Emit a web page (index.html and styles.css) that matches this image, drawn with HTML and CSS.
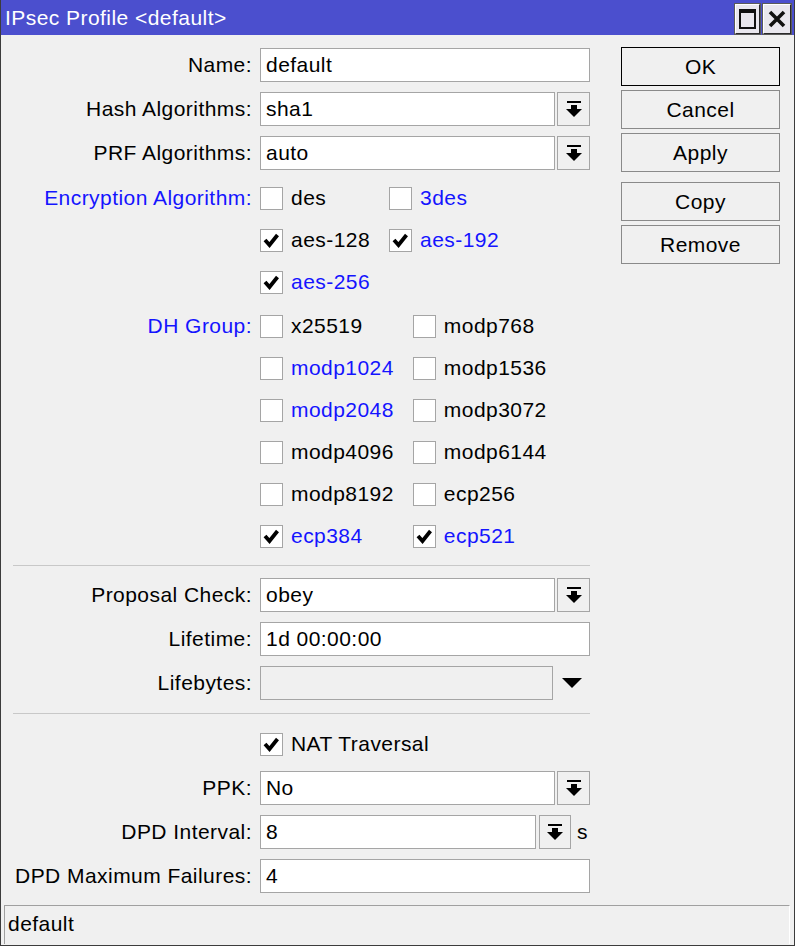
FILE: index.html
```html
<!DOCTYPE html>
<html lang="en">
<head>
    <meta charset="UTF-8">
    <title>IPsec Profile &lt;default&gt;</title>
    <link rel="stylesheet" href="styles.css">
</head>
<body>
    <div class="window">
        <div class="titlebar">
            <span class="title">IPsec Profile &lt;default&gt;</span>
            <div class="title-buttons">
                <button class="tbtn"><span class="max-icon"></span></button>
                <button class="tbtn">
                    <svg width="18" height="18" viewBox="0 0 18 18"><path d="M2 2 L16 16 M16 2 L2 16" stroke="#111" stroke-width="3.6"/></svg>
                </button>
            </div>
        </div>

        <div class="content">
            <div class="form">
                <div class="row">
                    <div class="label">Name:</div>
                    <div class="field"><div class="input">default</div></div>
                </div>
                <div class="row">
                    <div class="label">Hash Algorithms:</div>
                    <div class="field"><div class="input">sha1</div><div class="drop"><svg width="16" height="17" viewBox="0 0 16 17"><rect x="1" y="0" width="14" height="2"/><rect x="5" y="4" width="6" height="4"/><path d="M0 8 H16 L8 16 Z"/></svg></div></div>
                </div>
                <div class="row">
                    <div class="label">PRF Algorithms:</div>
                    <div class="field"><div class="input">auto</div><div class="drop"><svg width="16" height="17" viewBox="0 0 16 17"><rect x="1" y="0" width="14" height="2"/><rect x="5" y="4" width="6" height="4"/><path d="M0 8 H16 L8 16 Z"/></svg></div></div>
                </div>

                <div class="row group">
                    <div class="label blue">Encryption Algorithm:</div>
                    <div class="checks">
                        <div class="check"><span class="box"></span>des</div>
                        <div class="check blue"><span class="box"></span>3des</div>
                        <div class="check"><span class="box on"></span>aes-128</div>
                        <div class="check blue"><span class="box on"></span>aes-192</div>
                        <div class="check blue"><span class="box on"></span>aes-256</div>
                    </div>
                </div>

                <div class="row group">
                    <div class="label blue">DH Group:</div>
                    <div class="checks">
                        <div class="check"><span class="box"></span>x25519</div>
                        <div class="check"><span class="box"></span>modp768</div>
                        <div class="check blue"><span class="box"></span>modp1024</div>
                        <div class="check"><span class="box"></span>modp1536</div>
                        <div class="check blue"><span class="box"></span>modp2048</div>
                        <div class="check"><span class="box"></span>modp3072</div>
                        <div class="check"><span class="box"></span>modp4096</div>
                        <div class="check"><span class="box"></span>modp6144</div>
                        <div class="check"><span class="box"></span>modp8192</div>
                        <div class="check"><span class="box"></span>ecp256</div>
                        <div class="check blue"><span class="box on"></span>ecp384</div>
                        <div class="check blue"><span class="box on"></span>ecp521</div>
                    </div>
                </div>

                <div class="sep"></div>

                <div class="row">
                    <div class="label">Proposal Check:</div>
                    <div class="field"><div class="input">obey</div><div class="drop"><svg width="16" height="17" viewBox="0 0 16 17"><rect x="1" y="0" width="14" height="2"/><rect x="5" y="4" width="6" height="4"/><path d="M0 8 H16 L8 16 Z"/></svg></div></div>
                </div>
                <div class="row">
                    <div class="label">Lifetime:</div>
                    <div class="field"><div class="input">1d 00:00:00</div></div>
                </div>
                <div class="row">
                    <div class="label">Lifebytes:</div>
                    <div class="field"><div class="input disabled"></div><div class="arrow"><svg width="20" height="10" viewBox="0 0 20 10"><path d="M0 0 H20 L10 10 Z"/></svg></div></div>
                </div>

                <div class="sep sep-low"></div>

                <div class="row">
                    <div class="label"></div>
                    <div class="field"><div class="check"><span class="box on"></span>NAT Traversal</div></div>
                </div>
                <div class="row">
                    <div class="label">PPK:</div>
                    <div class="field"><div class="input">No</div><div class="drop"><svg width="16" height="17" viewBox="0 0 16 17"><rect x="1" y="0" width="14" height="2"/><rect x="5" y="4" width="6" height="4"/><path d="M0 8 H16 L8 16 Z"/></svg></div></div>
                </div>
                <div class="row">
                    <div class="label">DPD Interval:</div>
                    <div class="field short"><div class="input">8</div><div class="drop"><svg width="16" height="17" viewBox="0 0 16 17"><rect x="1" y="0" width="14" height="2"/><rect x="5" y="4" width="6" height="4"/><path d="M0 8 H16 L8 16 Z"/></svg></div><span class="unit">s</span></div>
                </div>
                <div class="row">
                    <div class="label">DPD Maximum Failures:</div>
                    <div class="field"><div class="input">4</div></div>
                </div>
            </div>

            <div class="actions">
                <button class="btn default">OK</button>
                <button class="btn">Cancel</button>
                <button class="btn">Apply</button>
                <button class="btn spaced">Copy</button>
                <button class="btn">Remove</button>
            </div>
        </div>

        <div class="status">default</div>
    </div>

    <script>
        // check marks for the ticked boxes
        document.querySelectorAll('.box.on').forEach(function (box) {
            box.innerHTML = '<svg width="21" height="21" viewBox="0 0 21 21"><path d="M4 10 L8.5 15 L16.5 5" fill="none" stroke="#000" stroke-width="3.8"/></svg>';
        });
    </script>
</body>
</html>
```

FILE: styles.css
```css
* {
    box-sizing: border-box;
}

body {
    margin: 0;
    font-family: 'Liberation Sans', Arial, sans-serif;
    font-size: 21px;
    letter-spacing: 0.45px;
    color: #000;
    background-color: #f0f0f0;
}

.window {
    width: 795px;
    height: 946px;
    display: flex;
    flex-direction: column;
    border: 1px solid #3c3c3c;
    border-top: none;
    background-color: #f0f0f0;
}

.titlebar {
    height: 35px;
    display: flex;
    align-items: center;
    justify-content: space-between;
    padding: 0 3px 0 4px;
    background-color: #4b4fce;
    color: #fff;
}

.title {
    padding-top: 1px;
}

.title-buttons {
    display: flex;
    gap: 3px;
    padding-top: 3px;
}

.tbtn {
    width: 28px;
    height: 30px;
    padding: 0;
    display: flex;
    align-items: center;
    justify-content: center;
    background-color: #e9e7ee;
    border: 1px solid #2a2a2a;
    border-top-color: #fff;
    border-left-color: #fff;
    outline: 1px solid #5a5a5a;
}

.tbtn:first-child {
    width: 25px;
}

.max-icon {
    width: 17px;
    height: 20px;
    border: 2px solid #111;
    border-top-width: 4px;
}

.content {
    flex: 1;
    display: flex;
}

.form {
    width: 589px;
    padding: 8px 0 0 12px;
}

.row {
    height: 44px;
    display: grid;
    grid-template-columns: 239px 330px;
    column-gap: 8px;
    align-items: center;
}

.label {
    text-align: right;
    white-space: nowrap;
}

.blue {
    color: #1414ff;
}

.field {
    display: flex;
    align-items: center;
    gap: 2px;
}

.input {
    flex: 1;
    height: 34px;
    padding: 0 5px;
    line-height: 32px;
    background-color: #fff;
    border: 1px solid #a5a5a5;
    white-space: nowrap;
}

.input.disabled {
    background-color: #f0f0f0;
    flex: none;
    width: 293px;
}

.drop {
    width: 33px;
    height: 34px;
    display: flex;
    align-items: center;
    justify-content: center;
    border: 1px solid #a5a5a5;
    background-color: #f0f0f0;
}

.drop svg {
    fill: #000;
}

.arrow {
    flex: 1;
    display: flex;
    justify-content: center;
    padding-right: 2px;
}

.field.short .input {
    flex: none;
    width: 276px;
}

.field.short .drop {
    width: 32px;
    margin-left: 1px;
}

.unit {
    margin-left: 4px;
}

.group {
    height: auto;
    align-items: start;
    margin-top: 2px;
}

.group .label {
    height: 42px;
    line-height: 42px;
}

.checks {
    display: grid;
    grid-template-columns: auto auto;
    justify-content: start;
    column-gap: 19px;
}

.check {
    height: 42px;
    display: flex;
    align-items: center;
    gap: 8px;
    white-space: nowrap;
}

.box {
    width: 23px;
    height: 23px;
    display: flex;
    align-items: center;
    justify-content: center;
    background-color: #fff;
    border: 1px solid #a5a5a5;
}

.sep {
    height: 1px;
    margin: 8px 0 7px 0;
    background-color: #c8c8c8;
}

.sep-low {
    margin: 8px 0 8px 0;
}

.actions {
    width: 159px;
    margin-left: 31px;
    padding-top: 12px;
    display: flex;
    flex-direction: column;
    gap: 4px;
}

.btn {
    height: 39px;
    padding: 0;
    font-family: inherit;
    font-size: 21px;
    letter-spacing: 0.45px;
    color: #000;
    background-color: #f0f0f0;
    border: 1px solid #8a8a8a;
}

.btn.default {
    border-color: #000;
}

.btn.spaced {
    margin-top: 6px;
}

.status {
    height: 39px;
    margin: 0 4px 1px 3px;
    padding: 0 0 0 3px;
    line-height: 36px;
    border-top: 1px solid #a0a0a0;
    border-left: 1px solid #a0a0a0;
    border-right: 1px solid #fff;
}
```
